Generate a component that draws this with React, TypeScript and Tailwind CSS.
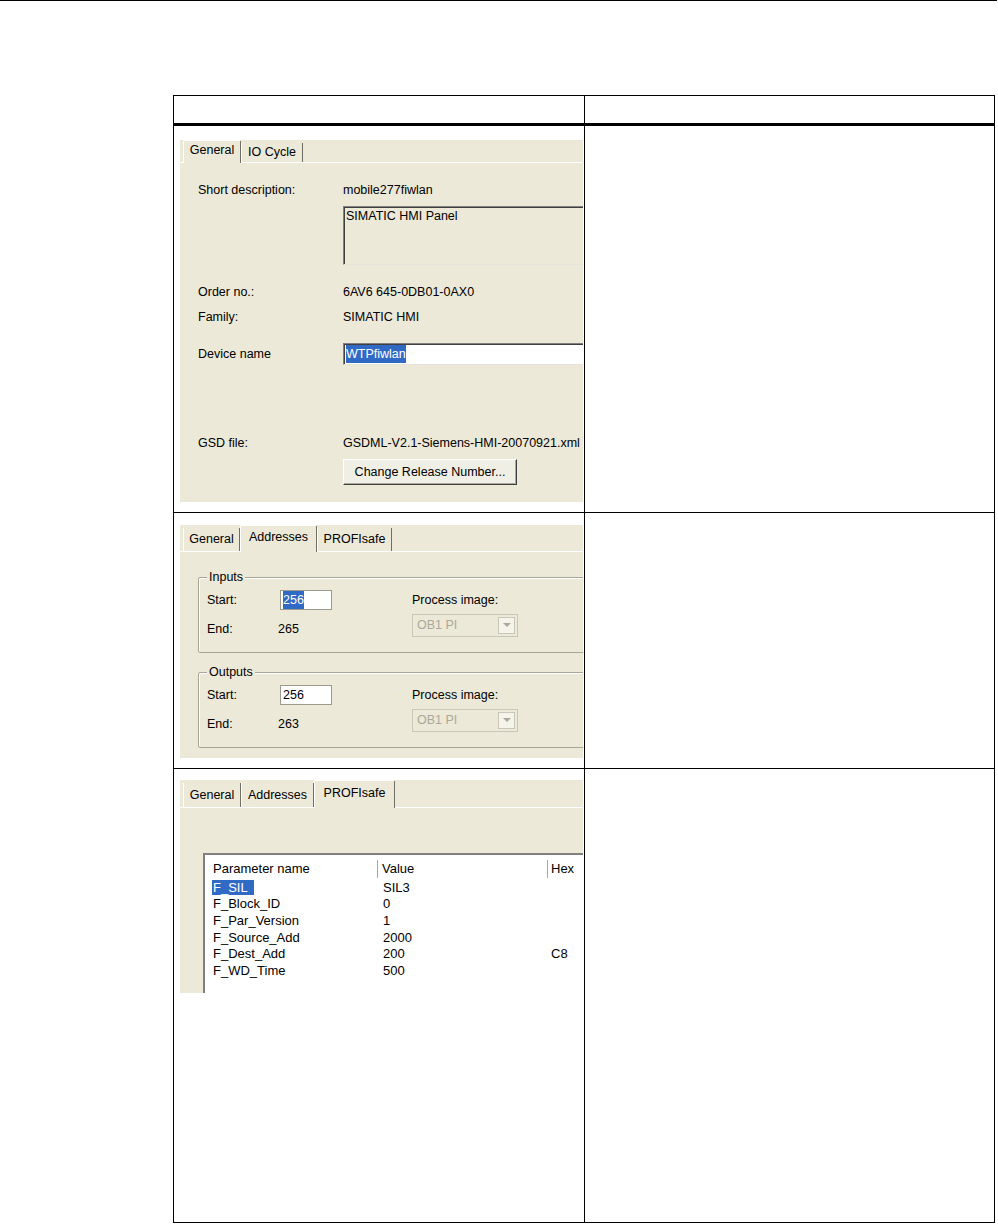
import React from 'react';

const ui = "font-['Liberation_Sans',Arial,sans-serif] text-[12.5px] text-black";

type TabDef = { label: string; w: number; active?: boolean };

function Tabs({ tabs, h }: { tabs: TabDef[]; h: number }) {
  return (
    <div className="flex items-end pl-[3px] border-b border-white" style={{ height: h }}>
      {tabs.map((t) =>
        t.active ? (
          <div
            key={t.label}
            className="-mb-px flex shrink-0 items-center justify-center bg-[#ece9d8] border-l border-t border-white border-r border-r-[#716f64] rounded-t-[2px]"
            style={{ width: t.w, height: h }}
          >
            <span className="-mt-[3px]">{t.label}</span>
          </div>
        ) : (
          <div
            key={t.label}
            className="flex shrink-0 items-center justify-center border-r border-[#716f64] border-l border-l-white"
            style={{ width: t.w, height: h - 4 }}
          >
            {t.label}
          </div>
        )
      )}
    </div>
  );
}

function Sunken({ className, children }: { className: string; children?: React.ReactNode }) {
  return (
    <div
      className={`shrink-0 bg-white border border-[#808080] border-b-[#e6e4da] border-r-[#e6e4da] shadow-[inset_1px_1px_0_#404040] ${className}`}
    >
      {children}
    </div>
  );
}

function Selected({ children }: { children: React.ReactNode }) {
  return <span className="bg-[#316ac5] text-white">{children}</span>;
}

function GeneralPanel() {
  return (
    <div className={`${ui} w-[403px] h-[362px] bg-[#ece9d8] overflow-hidden`}>
      <Tabs
        h={23}
        tabs={[
          { label: 'General', w: 58, active: true },
          { label: 'IO Cycle', w: 62 },
        ]}
      />
      <div className="pl-[18px]">
        <div className="mt-[17px] flex h-[20px] items-center">
          <span className="w-[145px] shrink-0">Short description:</span>
          <span>mobile277fiwlan</span>
        </div>
        <Sunken className="ml-[145px] mt-[6px] h-[59px] w-[280px] !bg-[#ece9d8] px-[2px] leading-[18px]">
          SIMATIC HMI Panel
        </Sunken>
        <div className="mt-[17px] flex h-[20px] items-center">
          <span className="w-[145px] shrink-0">Order no.:</span>
          <span>6AV6 645-0DB01-0AX0</span>
        </div>
        <div className="mt-[5px] flex h-[20px] items-center">
          <span className="w-[145px] shrink-0">Family:</span>
          <span>SIMATIC HMI</span>
        </div>
        <div className="mt-[16px] flex h-[22px] items-center">
          <span className="w-[145px] shrink-0">Device name</span>
          <Sunken className="h-[22px] w-[280px] flex items-center px-[2px]">
            <Selected>WTPfiwlan</Selected>
          </Sunken>
        </div>
        <div className="mt-[68px] flex h-[20px] items-center">
          <span className="w-[145px] shrink-0">GSD file:</span>
          <span className="whitespace-nowrap">GSDML-V2.1-Siemens-HMI-20070921.xml</span>
        </div>
        <div className="ml-[145px] mt-[6px] flex h-[26px] w-[174px] items-center justify-center bg-[#f0efe6] border border-white border-b-[#404040] border-r-[#404040] shadow-[inset_-1px_-1px_0_#aca899]">
          Change Release Number...
        </div>
      </div>
    </div>
  );
}

function Combo() {
  return (
    <div className="flex h-[23px] w-[106px] shrink-0 items-center justify-between border border-[#c9c7ba] bg-[#ece9d8] pl-[4px] pr-[2px] text-[#aca899]">
      <span>OB1 PI</span>
      <div className="flex h-[17px] w-[17px] items-center justify-center border border-[#c9c7ba] bg-[#f5f4ea]">
        <svg width="8" height="5" viewBox="0 0 8 5">
          <path d="M0 0h8L4 4z" fill="#aca899" />
        </svg>
      </div>
    </div>
  );
}

function Group({
  title,
  start,
  end,
  selected,
  className,
}: {
  title: string;
  start: string;
  end: string;
  selected?: boolean;
  className: string;
}) {
  return (
    <div
      className={`relative ml-[18px] h-[76px] w-[430px] rounded-[2px] border border-[#a8a697] shadow-[inset_1px_1px_0_#fff] ${className}`}
    >
      <span className="absolute -top-[9px] left-[8px] bg-[#ece9d8] px-[2px] leading-[16px]">{title}</span>
      <div className="flex h-[20px] items-center mt-[12px] pl-[8px]">
        <span className="w-[73px] shrink-0">Start:</span>
        <Sunken className="flex h-[20px] w-[52px] items-center px-[2px] !border-[#9c9a8c] !shadow-none">
          {selected ? <Selected>{start}</Selected> : <span>{start}</span>}
        </Sunken>
        <span className="ml-[80px] shrink-0">Process image:</span>
      </div>
      <div className="mt-[4px] flex h-[23px] items-center pl-[8px]">
        <span className="w-[71px] shrink-0 mt-[8px]">End:</span>
        <span className="w-[134px] shrink-0 mt-[8px]">{end}</span>
        <Combo />
      </div>
    </div>
  );
}

function AddressesPanel() {
  return (
    <div className={`${ui} w-[403px] h-[233px] bg-[#ece9d8] overflow-hidden`}>
      <Tabs
        h={27}
        tabs={[
          { label: 'General', w: 57 },
          { label: 'Addresses', w: 77, active: true },
          { label: 'PROFIsafe', w: 75 },
        ]}
      />
      <Group title="Inputs" start="256" end="265" selected className="mt-[25px]" />
      <Group title="Outputs" start="256" end="263" className="mt-[19px]" />
    </div>
  );
}

const params: [string, string, string][] = [
  ['F_SIL', 'SIL3', ''],
  ['F_Block_ID', '0', ''],
  ['F_Par_Version', '1', ''],
  ['F_Source_Add', '2000', ''],
  ['F_Dest_Add', '200', 'C8'],
  ['F_WD_Time', '500', ''],
];

function ProfisafePanel() {
  return (
    <div className={`${ui} w-[403px] h-[213px] bg-[#ece9d8] overflow-hidden`}>
      <Tabs
        h={28}
        tabs={[
          { label: 'General', w: 58 },
          { label: 'Addresses', w: 73 },
          { label: 'PROFIsafe', w: 81, active: true },
        ]}
      />
      <div className="ml-[23px] mt-[45px] h-[200px] w-[420px] bg-white border-l-2 border-t-2 border-l-[#808080] border-t-[#808080] text-[13px]">
        <div className="flex h-[24px] items-center pt-[4px]">
          <span className="w-[173px] shrink-0 pl-[8px] border-r border-[#aca899] h-[18px] leading-[18px]">Parameter name</span>
          <span className="w-[170px] shrink-0 pl-[4px] border-r border-[#aca899] h-[18px] leading-[18px]">Value</span>
          <span className="pl-[3px]">Hex</span>
        </div>
        {params.map(([n, v, h], i) => (
          <div key={n} className="flex h-[16.6px] items-center leading-[15px]">
            <span className="w-[173px] shrink-0 pl-[7px]">
              {i === 0 ? (
                <span className="bg-[#316ac5] text-white px-[1px] pr-[6px]">{n}</span>
              ) : (
                <span className="px-[1px]">{n}</span>
              )}
            </span>
            <span className="w-[170px] shrink-0 pl-[5px]">{v}</span>
            <span className="pl-[3px]">{h}</span>
          </div>
        ))}
      </div>
    </div>
  );
}

export default function App() {
  return (
    <div className="min-h-screen bg-white">
      <div className="h-px w-[997px] bg-black" />
      <div className="ml-[173px] mt-[94px] grid w-[822px] grid-cols-[411px_1fr] border border-black">
        <div className="h-[30px] border-b-[3px] border-r border-black" />
        <div className="h-[30px] border-b-[3px] border-black" />

        <div className="border-b border-r border-black pb-[10px] pl-[6px] pt-[14px]">
          <GeneralPanel />
        </div>
        <div className="border-b border-black" />

        <div className="border-b border-r border-black pb-[10px] pl-[6px] pt-[12px]">
          <AddressesPanel />
        </div>
        <div className="border-b border-black" />

        <div className="h-[453px] border-r border-black pl-[6px] pt-[11px]">
          <ProfisafePanel />
        </div>
        <div className="h-[453px]" />
      </div>
    </div>
  );
}
